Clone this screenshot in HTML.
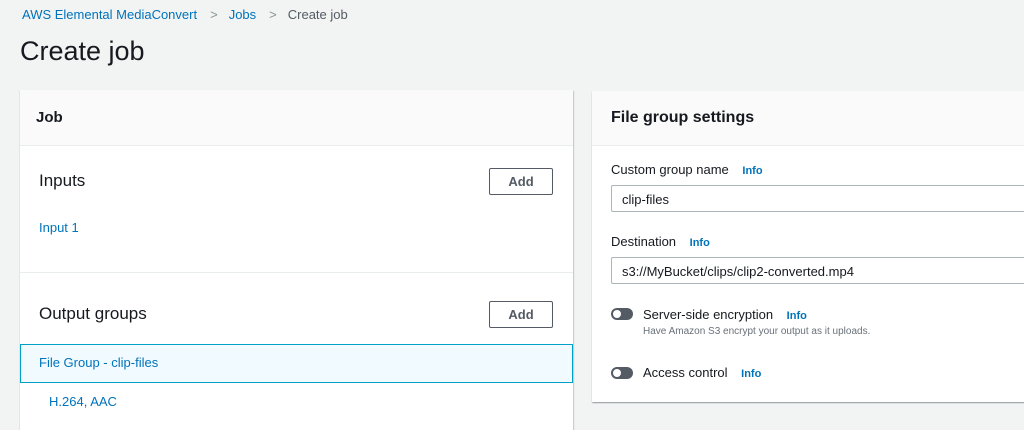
<!DOCTYPE html>
<html><head><style>
body{margin:0;width:1024px;height:417px;overflow:hidden;background:#f2f3f3;font-family:"Liberation Sans",sans-serif;color:#16191f;position:relative}
.a{position:absolute;white-space:nowrap}
.link{color:#0073bb}
.panel{position:absolute;background:#fff;box-shadow:0 1px 1px rgba(0,28,36,.3),1px 1px 1px rgba(0,28,36,.15)}
.hdr{position:absolute;left:0;right:0;top:0;height:54px;background:#fafafa;border-bottom:1px solid #eaeded}
.btn{position:absolute;width:62px;height:25px;border:1px solid #545b64;border-radius:2px;font-size:13px;font-weight:bold;color:#545b64;text-align:center;line-height:25px;background:#fff}
.info{color:#0073bb;font-size:11px;font-weight:bold}
.inp{position:absolute;left:19px;right:-2px;height:27px;border:1px solid #aab7b8;border-radius:2px;font-size:13px;line-height:27px;padding-left:10px;box-sizing:border-box}
.tog{position:absolute;width:22px;height:12px;border-radius:7px;background:#545b64}
.tog:after{content:"";position:absolute;left:2px;top:2px;width:8px;height:8px;border-radius:50%;background:#fff}
</style></head><body>
<div class="a" style="left:22px;top:7px;font-size:13px"><span class="link">AWS Elemental MediaConvert</span><span style="color:#879596;margin:0 11px 0 13px">&gt;</span><span class="link">Jobs</span><span style="color:#879596;margin:0 11px 0 13px">&gt;</span><span style="color:#545b64">Create job</span></div>
<div class="a" style="left:20px;top:36px;font-size:27px">Create job</div>

<div class="panel" style="left:20px;top:90px;width:553px;height:340px">
 <div class="hdr" style="height:55px"></div>
 <div class="a" style="left:16px;top:19px;font-size:15px;font-weight:bold">Job</div>
 <div class="a" style="left:19px;top:81px;font-size:17px">Inputs</div>
 <div class="btn" style="left:469px;top:78px">Add</div>
 <div class="a link" style="left:19px;top:130px;font-size:13px">Input 1</div>
 <div style="position:absolute;left:0;right:0;top:182px;border-top:1px solid #eaeded"></div>
 <div class="a" style="left:19px;top:214px;font-size:17px">Output groups</div>
 <div class="btn" style="left:469px;top:211px">Add</div>
 <div style="position:absolute;left:0;width:551px;top:254px;height:37px;border:1px solid #00a1c9;background:#f1faff"></div>
 <div class="a link" style="left:19px;top:265px;font-size:13px">File Group - clip-files</div>
 <div class="a link" style="left:29px;top:304px;font-size:13px">H.264, AAC</div>
</div>

<div class="panel" style="left:592px;top:91px;width:440px;height:311px">
 <div class="hdr"></div>
 <div class="a" style="left:19px;top:18px;font-size:16px;font-weight:bold">File group settings</div>
 <div class="a" style="left:19px;top:71px;font-size:13px">Custom group name <span class="info" style="margin-left:10px">Info</span></div>
 <div class="inp" style="top:94px">clip-files</div>
 <div class="a" style="left:19px;top:143px;font-size:13px">Destination <span class="info" style="margin-left:10px">Info</span></div>
 <div class="inp" style="top:166px">s3://MyBucket/clips/clip2-converted.mp4</div>
 <div class="tog" style="left:19px;top:217px"></div>
 <div class="a" style="left:51px;top:216px;font-size:13px">Server-side encryption <span class="info" style="margin-left:10px">Info</span></div>
 <div class="a" style="left:51px;top:235px;font-size:10px;color:#687078">Have Amazon S3 encrypt your output as it uploads.</div>
 <div class="tog" style="left:19px;top:276px"></div>
 <div class="a" style="left:51px;top:274px;font-size:13px">Access control <span class="info" style="margin-left:10px">Info</span></div>
</div>
</body></html>
